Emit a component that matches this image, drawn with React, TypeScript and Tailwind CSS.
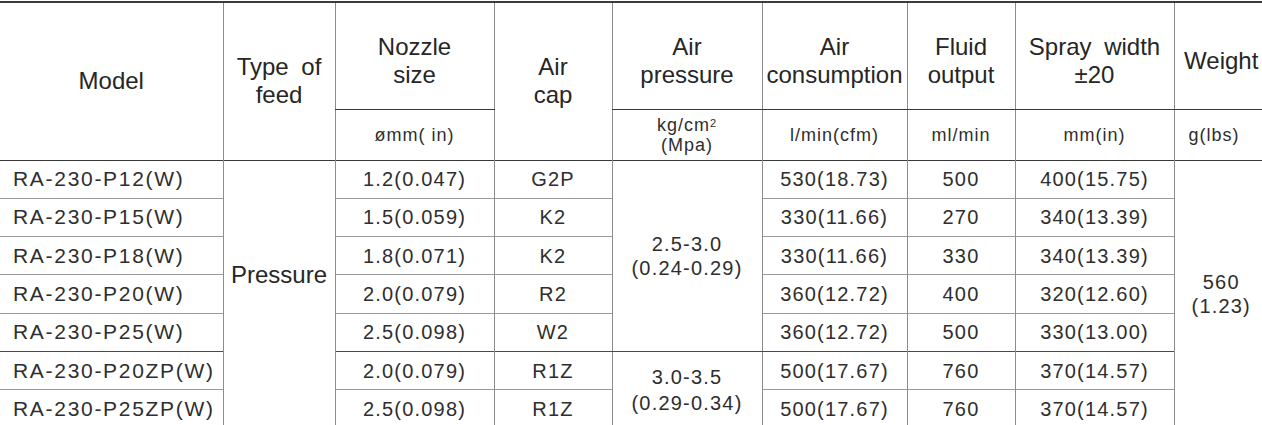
import React from "react";

const rows: { model: string; nozzle: string; cap: string; cons: string; fluid: string; spray: string }[] = [
  { model: "RA-230-P12(W)", nozzle: "1.2(0.047)", cap: "G2P", cons: "530(18.73)", fluid: "500", spray: "400(15.75)" },
  { model: "RA-230-P15(W)", nozzle: "1.5(0.059)", cap: "K2", cons: "330(11.66)", fluid: "270", spray: "340(13.39)" },
  { model: "RA-230-P18(W)", nozzle: "1.8(0.071)", cap: "K2", cons: "330(11.66)", fluid: "330", spray: "340(13.39)" },
  { model: "RA-230-P20(W)", nozzle: "2.0(0.079)", cap: "R2", cons: "360(12.72)", fluid: "400", spray: "320(12.60)" },
  { model: "RA-230-P25(W)", nozzle: "2.5(0.098)", cap: "W2", cons: "360(12.72)", fluid: "500", spray: "330(13.00)" },
  { model: "RA-230-P20ZP(W)", nozzle: "2.0(0.079)", cap: "R1Z", cons: "500(17.67)", fluid: "760", spray: "370(14.57)" },
  { model: "RA-230-P25ZP(W)", nozzle: "2.5(0.098)", cap: "R1Z", cons: "500(17.67)", fluid: "760", spray: "370(14.57)" },
];

const V = "border-l border-l-[#8c8c8c]";
const H = "text-[24px] leading-[28px] text-[#262626] font-normal";
const S = "text-[18px] leading-[20px] tracking-[1px] text-[#2e2e2e] font-normal";
const D = "text-[20px] leading-[24px] tracking-[1.2px] text-[#2e2e2e] text-center";

export default function App() {
  return (
    <div className="w-[1262px] h-[425px] overflow-hidden bg-white pt-[1px]" style={{ fontFamily: '"Liberation Sans", Arial, sans-serif' }}>
      <table className="w-[1268px] table-fixed border-collapse">
        <colgroup>
          <col className="w-[223px]" />
          <col className="w-[112px]" />
          <col className="w-[159px]" />
          <col className="w-[118px]" />
          <col className="w-[150px]" />
          <col className="w-[145px]" />
          <col className="w-[108px]" />
          <col className="w-[159px]" />
          <col className="w-[94px]" />
        </colgroup>
        <thead>
          <tr className="h-[107px] border-t-2 border-t-[#3a3a3a]">
            <th rowSpan={2} className={`${H} align-middle`}>Model</th>
            <th rowSpan={2} className={`${H} ${V} align-middle`}>
              <span className="[word-spacing:6px]">Type of</span>
              <br />feed
            </th>
            <th className={`${H} ${V} border-b-[1.5px] border-b-[#3a3a3a] pt-[10px]`}>Nozzle<br />size</th>
            <th rowSpan={2} className={`${H} ${V} align-middle`}>Air<br />cap</th>
            <th className={`${H} ${V} border-b-[1.5px] border-b-[#3a3a3a] pt-[10px]`}>Air<br />pressure</th>
            <th className={`${H} ${V} border-b-[1.5px] border-b-[#3a3a3a] pt-[10px]`}>Air<br />consumption</th>
            <th className={`${H} ${V} border-b-[1.5px] border-b-[#3a3a3a] pt-[10px]`}>Fluid<br />output</th>
            <th className={`${H} ${V} border-b-[1.5px] border-b-[#3a3a3a] pt-[10px]`}>
              <span className="[word-spacing:6px]">Spray width</span>
              <br />±20
            </th>
            <th className={`${H} ${V} border-b-[1.5px] border-b-[#3a3a3a] pt-[10px]`}>Weight</th>
          </tr>
          <tr className="h-[51px] border-b-[1.5px] border-b-[#3a3a3a]">
            <th className={`${S} ${V}`}>ømm( in)</th>
            <th className={`${S} ${V} text-[17px]`}>
              kg/cm<sup className="text-[11px] relative -top-[4px]">2</sup>
              <br />(Mpa)
            </th>
            <th className={`${S} ${V}`}>l/min(cfm)</th>
            <th className={`${S} ${V}`}>ml/min</th>
            <th className={`${S} ${V}`}>mm(in)</th>
            <th className={`${S} ${V} text-left pl-[14px]`}>g(lbs)</th>
          </tr>
        </thead>
        <tbody>
          {rows.map((r, i) => {
            const rowB = i === 4 ? "border-b border-b-[#4a4a4a]" : "border-b border-b-[#9a9a9a]";
            return (
              <tr key={i} className={`h-[38.3px] ${rowB}`}>
                <td className="text-[21px] leading-[24px] tracking-[1.7px] text-[#2e2e2e] pl-[13px] whitespace-nowrap">{r.model}</td>
                {i === 0 && (
                  <td rowSpan={7} className={`${V} text-[24px] leading-[28px] text-[#262626] text-center pb-[38px]`}>
                    Pressure
                  </td>
                )}
                <td className={`${D} ${V}`}>{r.nozzle}</td>
                <td className={`${D} ${V}`}>{r.cap}</td>
                {i === 0 && (
                  <td rowSpan={5} className={`${D} ${V} border-b border-b-[#4a4a4a]`}>
                    2.5-3.0
                    <br />
                    (0.24-0.29)
                  </td>
                )}
                {i === 5 && (
                  <td rowSpan={2} className={`${D} ${V} leading-[26px]`}>
                    3.0-3.5
                    <br />
                    (0.29-0.34)
                  </td>
                )}
                <td className={`${D} ${V}`}>{r.cons}</td>
                <td className={`${D} ${V}`}>{r.fluid}</td>
                <td className={`${D} ${V}`}>{r.spray}</td>
                {i === 0 && (
                  <td rowSpan={7} className={`${D} ${V} leading-[22px]`}>
                    560
                    <br />
                    (1.23)
                  </td>
                )}
              </tr>
            );
          })}
        </tbody>
      </table>
    </div>
  );
}
